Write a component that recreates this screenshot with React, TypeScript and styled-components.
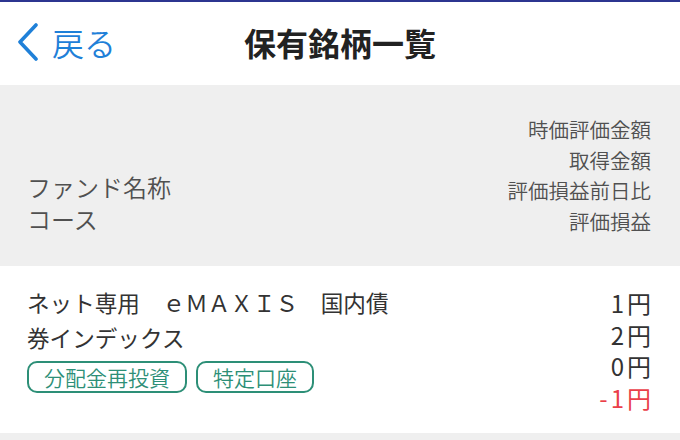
import styled, { createGlobalStyle } from "styled-components";

const GlobalStyle = createGlobalStyle`
  html, body {
    margin: 0;
    padding: 0;
    background: #ffffff;
    font-family: "Noto Sans CJK JP", "Noto Sans", sans-serif;
  }
  * { box-sizing: border-box; }
`;

const Page = styled.div`
  width: 680px;
  height: 440px;
  overflow: hidden;
  border-top: 2px solid #2c3590;
  background: #efefef;
`;

const NavBar = styled.div`
  height: 83px;
  background: #ffffff;
  display: grid;
  grid-template-columns: 1fr auto 1fr;
  align-items: center;
`;

const BackButton = styled.div`
  display: flex;
  align-items: center;
  gap: 12px;
  padding-left: 16px;
  color: #1f80d8;
  font-size: 32px;
  font-weight: 350;
  padding-bottom: 4px;
`;

const Title = styled.div`
  font-size: 32px;
  font-weight: 700;
  color: #222222;
  padding-bottom: 4px;
`;

const HeadSection = styled.div`
  height: 179px;
  background: #efefef;
  display: flex;
  justify-content: space-between;
  align-items: flex-end;
  padding: 0 29px 28px 27px;
`;

const HeadLeft = styled.div`
  font-size: 24px;
  line-height: 32px;
  font-weight: 350;
  color: #505050;
  padding-bottom: 1px;
`;

const HeadRight = styled.div`
  text-align: right;
  font-size: 20.5px;
  line-height: 30.5px;
  font-weight: 350;
  color: #505050;
`;

const Row = styled.div`
  margin-top: 2px;
  height: 167px;
  background: #ffffff;
  display: flex;
  justify-content: space-between;
  align-items: flex-start;
  padding: 19px 29px 0 27px;
`;

const NameBlock = styled.div`
  display: flex;
  flex-direction: column;
`;

const FundName = styled.div`
  width: 375px;
  font-size: 22.6px;
  line-height: 35px;
  color: #333333;
`;

const Tags = styled.div`
  display: flex;
  gap: 9px;
  margin-top: 6px;
`;

const Tag = styled.div`
  height: 32px;
  display: flex;
  align-items: center;
  padding: 0 15px;
  border: 2px solid #2d8f77;
  border-radius: 10px;
  color: #2d8f77;
  font-size: 21px;
  font-weight: 350;
`;

const Values = styled.div`
  text-align: right;
  padding-top: 2px;
`;

const Value = styled.div<{ $negative?: boolean }>`
  font-size: 24px;
  line-height: 31.6px;
  color: ${(p) => (p.$negative ? "#ea3f4a" : "#333333")};
  letter-spacing: 3px;
  margin-right: -3px;
`;

function ChevronLeft() {
  return (
    <svg width="24" height="38" viewBox="0 0 24 38">
      <path
        d="M20 2 L4 19 L20 36"
        fill="none"
        stroke="#1f80d8"
        strokeWidth="3.6"
        strokeLinecap="round"
        strokeLinejoin="round"
      />
    </svg>
  );
}

export default function App() {
  return (
    <>
      <GlobalStyle />
      <Page>
        <NavBar>
          <BackButton>
            <ChevronLeft />
            <span>戻る</span>
          </BackButton>
          <Title>保有銘柄一覧</Title>
          <div />
        </NavBar>
        <HeadSection>
          <HeadLeft>
            <div>ファンド名称</div>
            <div>コース</div>
          </HeadLeft>
          <HeadRight>
            <div>時価評価金額</div>
            <div>取得金額</div>
            <div>評価損益前日比</div>
            <div>評価損益</div>
          </HeadRight>
        </HeadSection>
        <Row>
          <NameBlock>
            <FundName>ネット専用　ｅＭＡＸＩＳ　国内債券インデックス</FundName>
            <Tags>
              <Tag>分配金再投資</Tag>
              <Tag>特定口座</Tag>
            </Tags>
          </NameBlock>
          <Values>
            <Value>1円</Value>
            <Value>2円</Value>
            <Value>0円</Value>
            <Value $negative>-1円</Value>
          </Values>
        </Row>
      </Page>
    </>
  );
}
